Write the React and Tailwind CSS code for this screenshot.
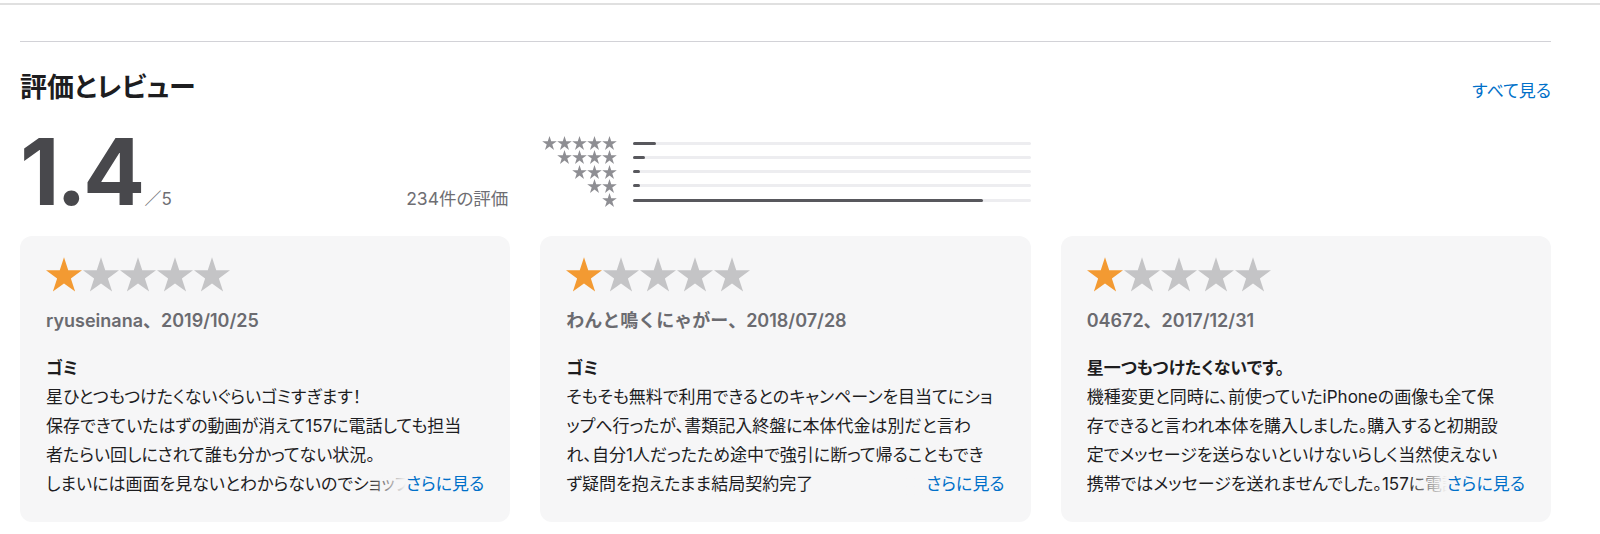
import React from "react";

const reviews = [
  {
    name: "ryuseinana、2019/10/25",
    title: "ゴミ",
    lines: [
      "星ひとつもつけたくないぐらいゴミすぎます！",
      "保存できていたはずの動画が消えて157に電話しても担当",
      "者たらい回しにされて誰も分かってない状況。",
      "しまいには画面を見ないとわからないのでショップへ",
    ],
  },
  {
    name: "わんと鳴くにゃがー、2018/07/28",
    title: "ゴミ",
    lines: [
      "そもそも無料で利用できるとのキャンペーンを目当てにショ",
      "ップへ行ったが、書類記入終盤に本体代金は別だと言わ",
      "れ、自分1人だったため途中で強引に断って帰ることもでき",
      "ず疑問を抱えたまま結局契約完了",
    ],
  },
  {
    name: "04672、2017/12/31",
    title: "星一つもつけたくないです。",
    lines: [
      "機種変更と同時に、前使っていたiPhoneの画像も全て保",
      "存できると言われ本体を購入しました。購入すると初期設",
      "定でメッセージを送らないといけないらしく当然使えない",
      "携帯ではメッセージを送れませんでした。157に電話",
    ],
  },
];

const histogram = [
  { stars: 5, pct: 5.8 },
  { stars: 4, pct: 3 },
  { stars: 3, pct: 1.8 },
  { stars: 2, pct: 1.8 },
  { stars: 1, pct: 88 },
];

// regular five point star, tight box
function Star({ className }) {
  return (
    <svg viewBox="0 0 24 23" className={className}>
      <polygon
        fill="currentColor"
        points="12,0 14.83,8.72 24,8.72 16.58,14.11 19.42,22.83 12,17.44 4.58,22.83 7.42,14.11 0,8.72 9.17,8.72"
      />
    </svg>
  );
}

function ReviewCard({ review }) {
  return (
    <div className="h-[286px] rounded-[12px] bg-[#f6f6f7] px-[26px] pt-[21px]">
      <div className="flex gap-[1px]">
        <Star className="h-[35px] w-[36px] text-[#f39a32]" />
        <Star className="h-[35px] w-[36px] text-[#c4c4c6]" />
        <Star className="h-[35px] w-[36px] text-[#c4c4c6]" />
        <Star className="h-[35px] w-[36px] text-[#c4c4c6]" />
        <Star className="h-[35px] w-[36px] text-[#c4c4c6]" />
      </div>
      <div className="mt-[14px] text-[18px] leading-[29px] font-semibold text-[#6b6b70] [font-feature-settings:normal]">
        {review.name}
      </div>
      <div className="mt-[19px] text-[17px] leading-[29px] font-bold text-[#1d1d1f]">
        {review.title}
      </div>
      <div className="relative text-[17px] leading-[29px] text-[#1d1d1f]">
        {review.lines.map((line, i) => (
          <div key={i} className="overflow-hidden whitespace-nowrap">
            {line}
          </div>
        ))}
        <div className="absolute right-0 bottom-0 flex h-[29px]">
          <div className="w-[40px] bg-linear-to-r from-[#f6f6f7]/0 to-[#f6f6f7]" />
          <span className="bg-[#f6f6f7] text-[#0070c9]">さらに見る</span>
        </div>
      </div>
    </div>
  );
}

export default function App() {
  return (
    <div className="h-[534px] w-[1600px] overflow-hidden bg-white font-['Inter','Noto_Sans_CJK_JP',sans-serif] [font-feature-settings:'palt']">
      <div className="mt-[3px] h-[2px] bg-[#e0e0e0]" />
      <div className="ml-[20px] w-[1531px]">
        <div className="mt-[36px] h-px bg-[#d2d2d7]" />

        {/* header */}
        <div className="mt-[29px] flex items-baseline justify-between">
          <h2 className="text-[27px] leading-[33px] font-bold text-[#1d1d1f]">評価とレビュー</h2>
          <a className="text-[17px] text-[#0070c9]">すべて見る</a>
        </div>

        {/* stats */}
        <div className="mt-[21px] grid grid-cols-3 gap-x-[30px]">
          <div className="flex items-baseline justify-between">
            <div className="flex items-baseline">
              <span className="text-[92px] leading-none font-bold tracking-[-0.04em] text-[#48484c]">1.4</span>
              <span className="ml-[3px] text-[17px] text-[#6e6e73]">／5</span>
            </div>
            <span className="mr-[2px] text-[17.5px] text-[#6e6e73]">234件の評価</span>
          </div>
          <div className="mt-[10.5px] flex flex-col self-start">
            {histogram.map((row) => (
              <div key={row.stars} className="flex h-[14.25px] items-center">
                <div className="flex w-[77px] justify-end">
                  {Array.from({ length: row.stars }).map((_, i) => (
                    <Star key={i} className="h-[14px] w-[15px] text-[#8e8e93]" />
                  ))}
                </div>
                <div className="ml-[16px] h-[3px] flex-1 rounded-full bg-[#ededf0]">
                  <div className="h-[3px] rounded-full bg-[#58585d]" style={{ width: `${row.pct}%` }} />
                </div>
              </div>
            ))}
          </div>
        </div>

        {/* reviews */}
        <div className="mt-[18.6px] grid grid-cols-3 gap-x-[30px]">
          {reviews.map((r) => (
            <ReviewCard key={r.name} review={r} />
          ))}
        </div>
      </div>
    </div>
  );
}
